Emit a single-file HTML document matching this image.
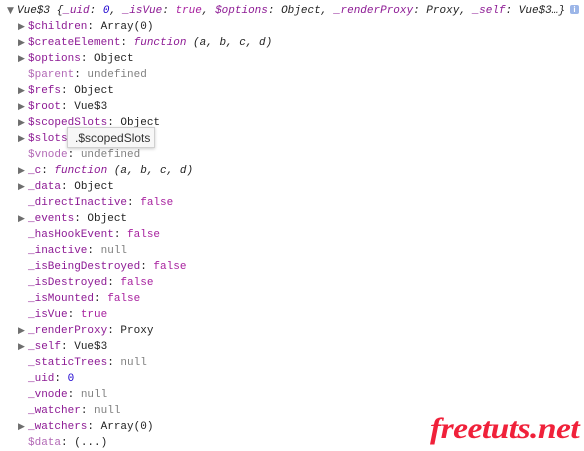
<!DOCTYPE html>
<html><head><meta charset="utf-8"><style>
body{margin:0;width:584px;height:451px;background:#fff;overflow:hidden;position:relative;font-family:"Liberation Mono","DejaVu Sans Mono",monospace;font-size:11px;color:#222}
.l{position:absolute;left:28px;height:16px;line-height:16px;white-space:pre;margin-top:1px}
.a{position:absolute;left:-10px;top:0;color:#6e6e6e;font-size:9px;font-family:"DejaVu Sans",sans-serif}
.k{color:#8d1a94}.d{color:#b268b5}.g{color:#808080}.n{color:#1c00cf}.b{color:#a8219f}.i{font-style:italic}
.tip{position:absolute;left:67px;top:127px;width:88px;height:21px;background:#f7f7f7;border:1px solid #d0d0d0;box-shadow:0 1px 3px rgba(0,0,0,.2);font:12px "Liberation Sans",sans-serif;color:#333;line-height:21px;box-sizing:border-box;padding-left:7px}
.wm{position:absolute;left:430px;top:412px;font:italic bold 30px "Liberation Serif",serif;color:#f0213a;letter-spacing:-0.5px;transform:scaleX(1.12);transform-origin:left}
.info{position:absolute;left:570px;top:5px;width:9px;height:9px;background:#9cb6e8;border-radius:2px;color:#fff;font:bold 8px "Liberation Sans",sans-serif;text-align:center;line-height:9px}
</style></head><body>
<div class="l i" style="top:2px;left:17px"><span class="a" style="font-style:normal">▼</span>Vue$3 {<span class="k">_uid</span>: <span class="n">0</span>, <span class="k">_isVue</span>: <span class="b">true</span>, <span class="k">$options</span>: Object, <span class="k">_renderProxy</span>: Proxy, <span class="k">_self</span>: Vue$3…}</div>
<div class="info">i</div>
<div class="l" style="top:18px"><span class="a">▶</span><span class="k">$children</span>: Array(0)</div>
<div class="l" style="top:34px"><span class="a">▶</span><span class="k">$createElement</span>: <span class="k i">function</span> <span class="i">(a, b, c, d)</span></div>
<div class="l" style="top:50px"><span class="a">▶</span><span class="k">$options</span>: Object</div>
<div class="l" style="top:66px"><span class="d">$parent</span>: <span class="g">undefined</span></div>
<div class="l" style="top:82px"><span class="a">▶</span><span class="k">$refs</span>: Object</div>
<div class="l" style="top:98px"><span class="a">▶</span><span class="k">$root</span>: Vue$3</div>
<div class="l" style="top:114px"><span class="a">▶</span><span class="k">$scopedSlots</span>: Object</div>
<div class="l" style="top:130px"><span class="a">▶</span><span class="k">$slots</span>: Object</div>
<div class="l" style="top:146px"><span class="d">$vnode</span>: <span class="g">undefined</span></div>
<div class="l" style="top:162px"><span class="a">▶</span><span class="k">_c</span>: <span class="k i">function</span> <span class="i">(a, b, c, d)</span></div>
<div class="l" style="top:178px"><span class="a">▶</span><span class="k">_data</span>: Object</div>
<div class="l" style="top:194px"><span class="k">_directInactive</span>: <span class="b">false</span></div>
<div class="l" style="top:210px"><span class="a">▶</span><span class="k">_events</span>: Object</div>
<div class="l" style="top:226px"><span class="k">_hasHookEvent</span>: <span class="b">false</span></div>
<div class="l" style="top:242px"><span class="k">_inactive</span>: <span class="g">null</span></div>
<div class="l" style="top:258px"><span class="k">_isBeingDestroyed</span>: <span class="b">false</span></div>
<div class="l" style="top:274px"><span class="k">_isDestroyed</span>: <span class="b">false</span></div>
<div class="l" style="top:290px"><span class="k">_isMounted</span>: <span class="b">false</span></div>
<div class="l" style="top:306px"><span class="k">_isVue</span>: <span class="b">true</span></div>
<div class="l" style="top:322px"><span class="a">▶</span><span class="k">_renderProxy</span>: Proxy</div>
<div class="l" style="top:338px"><span class="a">▶</span><span class="k">_self</span>: Vue$3</div>
<div class="l" style="top:354px"><span class="k">_staticTrees</span>: <span class="g">null</span></div>
<div class="l" style="top:370px"><span class="k">_uid</span>: <span class="n">0</span></div>
<div class="l" style="top:386px"><span class="k">_vnode</span>: <span class="g">null</span></div>
<div class="l" style="top:402px"><span class="k">_watcher</span>: <span class="g">null</span></div>
<div class="l" style="top:418px"><span class="a">▶</span><span class="k">_watchers</span>: Array(0)</div>
<div class="l" style="top:434px"><span class="d">$data</span>: (...)</div>
<div class="tip">.$scopedSlots</div>
<div class="wm">freetuts.net</div>
</body></html>
